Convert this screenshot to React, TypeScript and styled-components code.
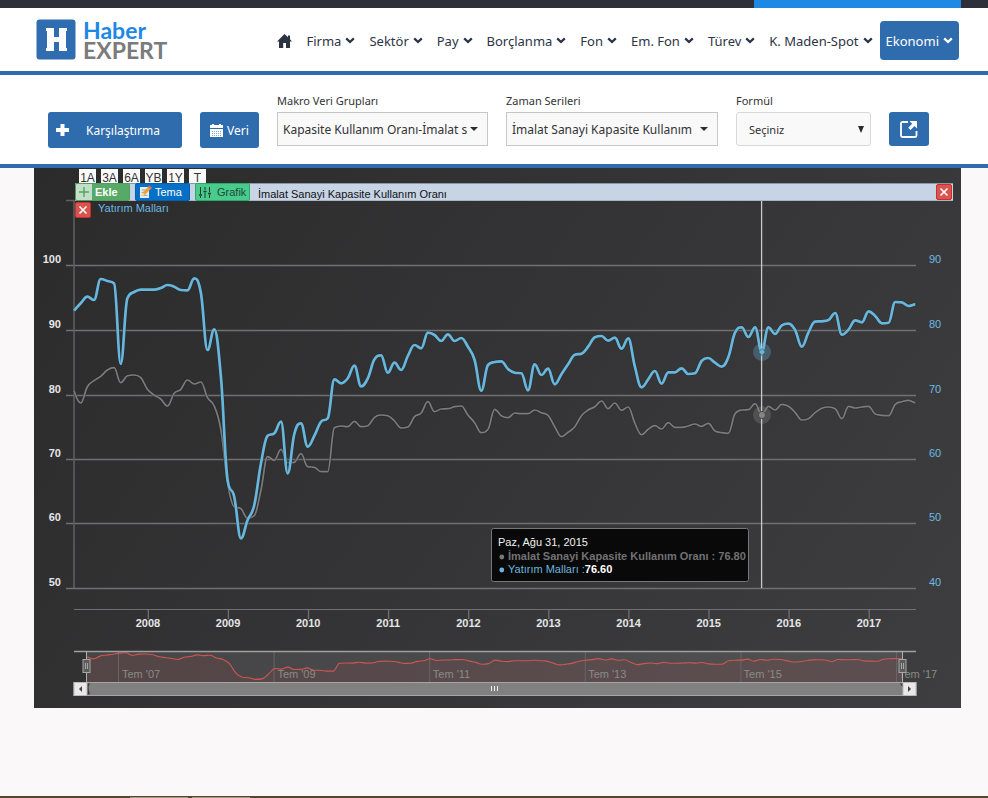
import React from "react";
import styled, { createGlobalStyle } from "styled-components";

const BLUE = "#2f6cae";
const UI_FONT = '"Noto Sans", "Open Sans", sans-serif';
const CHART_FONT = '"Liberation Sans", Arial, sans-serif';

const GlobalStyle = createGlobalStyle`
  *, *::before, *::after { box-sizing: border-box; }
  body { margin: 0; background: #faf8f9; color: #333; font-family: ${UI_FONT}; font-size: 12px; }
  button, select { font-family: inherit; font-size: inherit; color: inherit; margin: 0; }
`;

const Page = styled.div`
  display: flex;
  flex-direction: column;
  min-height: 100vh;
`;

const TopStrip = styled.div`
  display: flex;
  justify-content: flex-end;
  height: 8px;
  padding-right: 27px;
  background: #2f2f3a;
`;

const TopAccent = styled.div`
  width: 207px;
  background: #1e88e5;
`;

const Header = styled.header`
  display: flex;
  align-items: center;
  justify-content: space-between;
  height: 67px;
  padding: 0 29px 0 36px;
  background: #fff;
  border-bottom: 4px solid ${BLUE};
`;

const Logo = styled.a`
  display: flex;
  align-items: center;
  gap: 7px;
  text-decoration: none;
`;

const LogoWords = styled.span`
  display: flex;
  flex-direction: column;
  font-family: Lato, sans-serif;
  font-size: 23px;
  line-height: 20px;
  font-weight: 700;
  color: #7b7b7d;
`;

const LogoTop = styled.span`
  color: #1e88e5;
`;

const Nav = styled.nav`
  display: flex;
  align-items: center;
  padding-top: 2px;
`;

const NavLink = styled.a<{ $active?: boolean }>`
  display: flex;
  align-items: center;
  gap: 4px;
  height: 39px;
  padding: 0 ${(p) => (p.$active ? "6px" : "7px")};
  border-radius: 4px;
  font-size: 13px;
  white-space: nowrap;
  text-decoration: none;
  color: ${(p) => (p.$active ? "#fff" : "#2c3444")};
  background: ${(p) => (p.$active ? BLUE : "transparent")};
`;

const Filters = styled.form`
  display: grid;
  grid-template-columns: 134px 59px 211fr 212fr 135fr 40px;
  column-gap: 18px;
  align-items: end;
  height: 93px;
  padding: 0 59px 16px 48px;
  background: #fff;
  border-bottom: 4px solid ${BLUE};
`;

const ActionButton = styled.button<{ $wide?: boolean }>`
  display: flex;
  align-items: center;
  justify-content: ${(p) => (p.$wide ? "flex-start" : "center")};
  gap: ${(p) => (p.$wide ? "17px" : "4px")};
  height: 36px;
  padding: 0 8px;
  border: 0;
  border-radius: 3px;
  background: ${BLUE};
  color: #fff;
`;

const IconButton = styled(ActionButton)`
  height: 34px;
  margin-bottom: 2px;
  padding: 0;
`;

const Field = styled.div`
  display: flex;
  flex-direction: column;
  min-width: 0;
  margin-bottom: 2px;
`;

const FieldLabel = styled.label`
  height: 21px;
  font-size: 11px;
  line-height: 20px;
  white-space: nowrap;
`;

const SelectBox = styled.div<{ $soft?: boolean }>`
  display: flex;
  align-items: center;
  height: 34px;
  padding-right: ${(p) => (p.$soft ? "5px" : "9px")};
  border: 1px solid ${(p) => (p.$soft ? "#d8d8d8" : "#c6c6c6")};
  border-radius: ${(p) => (p.$soft ? "3px" : "0")};
  background: #f9f9f9;
`;

const Select = styled.select<{ $soft?: boolean }>`
  flex: 1;
  min-width: 0;
  height: 32px;
  padding: 0 0 0 ${(p) => (p.$soft ? "12px" : "5px")};
  border: 0;
  outline: 0;
  appearance: none;
  background: transparent;
  font-size: ${(p) => (p.$soft ? "11px" : "12px")};
`;

const ChartPanel = styled.section`
  display: grid;
  margin: 0 27px 0 34px;
  background: linear-gradient(125deg, #2b2b2c, #3e3e40);
  font-family: ${CHART_FONT};
`;

const ChartSvg = styled.svg`
  grid-area: 1 / 1;
  display: block;
  width: 100%;
  height: auto;
`;

const ChartControls = styled.div`
  grid-area: 1 / 1;
  z-index: 1;
  align-self: start;
  padding: 1px 8px 0 41px;
`;

const Ranges = styled.div`
  display: flex;
  gap: 5px;
  padding-left: 4px;
`;

const RangeButton = styled.button`
  width: 17px;
  height: 14px;
  padding: 3px 0 0;
  border: 0;
  background: #fafafa;
  font-size: 12px;
  line-height: 12px;
`;

const SeriesBar = styled.div`
  display: flex;
  align-items: center;
  height: 18px;
  background: #c7d4e6;
  box-shadow: inset 0 1px #8b97a6, inset 0 -1px #a9b4c3;
  font-size: 11px;
  color: #111;
`;

const BarButton = styled.button<{ $bg: string; $edge: string; $fg: string; $bold?: boolean }>`
  display: flex;
  align-items: center;
  gap: 3px;
  width: 55px;
  height: 18px;
  margin-right: 5px;
  padding: 0;
  border: 1px solid ${(p) => p.$edge};
  border-radius: 2px;
  background: ${(p) => p.$bg};
  color: ${(p) => p.$fg};
  font-size: 11px;
  font-weight: ${(p) => (p.$bold ? 700 : 400)};
`;

const SeriesName = styled.span`
  flex: 1;
  padding: 3px 0 0 3px;
  white-space: nowrap;
`;

const CloseButton = styled.button`
  display: flex;
  align-items: center;
  justify-content: center;
  width: 16px;
  height: 16px;
  margin-right: 1px;
  padding: 0;
  border: 1px solid #c9302c;
  border-radius: 2px;
  background: #d9534f;
`;

const SubSeries = styled.div`
  display: flex;
  align-items: flex-start;
  gap: 6px;
  padding-top: 1px;
  font-size: 11px;
  line-height: 13px;
  color: #6cb9e2;
`;

const Footer = styled.footer`
  display: flex;
  gap: 4px;
  height: 2px;
  margin-top: auto;
  padding: 1px 0 0 130px;
  background: #54472a;
`;

const FooterTab = styled.div`
  width: 58px;
  background: #a39c88;
`;

const Chevron = () => (
  <svg width="10" height="7" viewBox="0 0 10 7" aria-hidden="true">
    <path d="M1.2 1.4 5 5l3.8-3.6" fill="none" stroke="currentColor" strokeWidth="2.3" />
  </svg>
);

const Cross = () => (
  <svg width="10" height="10" viewBox="0 0 10 10" aria-hidden="true">
    <path d="M1.5 1.5l7 7M8.5 1.5l-7 7" stroke="#fff" strokeWidth="1.6" />
  </svg>
);

const Caret = ({ tall }: { tall?: boolean }) => (
  <svg width="8" height={tall ? 7 : 4} viewBox={tall ? "0 0 8 7" : "0 0 8 4"} aria-hidden="true">
    <path d={tall ? "M1 0h6L4 7z" : "M0 0h8L4 4z"} fill="#2b2b2b" />
  </svg>
);

const PLOT_LEFT = 40;
const PLOT_RIGHT = 882;
const MONTH = 6.677;

const investment = [
  142.7, 135.3, 128.7, 132, 111, 113, 115.5, 196, 130.3, 124, 121.7, 121.7, 121.7, 120, 117, 118.7, 122, 122.3, 110.3,
  125, 182, 161.3, 208.7, 312, 328.7, 370.3, 352, 337, 295.3, 267.7, 265.3, 253.7, 305.3, 266, 255.3, 278.7, 267.7,
  253.7, 250.3, 211.3, 215.3, 210.3, 197.7, 218.3, 210.3, 191.3, 187.3, 204.7, 194.7, 202, 188, 177, 180.3, 164.7, 167,
  173, 166.3, 173, 170, 178.7, 192, 222.7, 197, 194, 193.3, 201, 204.7, 205.3, 222.3, 196.3, 207, 200.7, 216.3, 206.3,
  196.3, 186.7, 185.7, 178.7, 169.3, 168, 172.7, 169.7, 180.7, 170.3, 198.7, 219.3, 211.3, 203, 215.7, 204.3, 204.3,
  200.3, 206, 205.3, 193, 190, 194.7, 198.7, 189.3, 164.7, 159.3, 169, 159.3, 183.7, 159.3, 166, 157.3, 155.7, 162,
  178.7, 164.3, 153.7, 153.3, 152, 145, 166.7, 161.7, 152.3, 154.3, 143.3, 148, 155.3, 154.7, 134, 134.3, 138, 136.3,
];

const capacity = [
  222.7, 235, 218.7, 212.7, 208.3, 202, 199.7, 214.7, 207.7, 207, 209.7, 221.3, 227, 231, 238, 225.3, 221.3, 212, 216,
  214, 229.7, 238, 262, 315.3, 338.7, 340.7, 350.3, 347.7, 322, 288.7, 292.3, 281.3, 294.7, 294.3, 285.7, 298.7, 299.3,
  303.7, 303.7, 259.7, 258, 258.7, 253.3, 258.7, 257.7, 249.3, 247, 247.7, 253, 260, 259, 248.7, 245, 233.7, 243.7, 241,
  240.7, 238.7, 238, 247, 254.7, 264.7, 261.3, 241.3, 247.7, 249.7, 245, 245.7, 245.7, 242, 244.7, 247.3, 258.7, 268.7,
  264.3, 258.7, 247.7, 242, 238.7, 233, 240.7, 235, 242.3, 239, 255.3, 266.7, 261.3, 257.7, 261, 254.7, 259.3, 259.3,
  258, 256, 258.3, 255.3, 263, 264.7, 265.3, 245.7, 242, 241.7, 235.7, 247, 238.3, 242, 236.3, 238.3, 244.3, 252, 250.7,
  244.7, 240.3, 239, 240.7, 250.7, 238.3, 240, 239, 238.3, 246, 247.3, 247.7, 236.3, 233.7, 232.3, 234.7,
];

/* Smooth curve whose control points never overshoot the neighbouring values. */
function spline(ys: number[], x0: number, step: number): string {
  const reach = step * 0.4;
  let d = `M${x0} ${ys[0]}`;
  let previous = { x: x0, y: ys[0] };
  for (let i = 1; i < ys.length; i++) {
    const x = x0 + i * step;
    const y = ys[i];
    const last = ys[i - 1];
    let left = y;
    let right = y;
    if (i < ys.length - 1) {
      const next = ys[i + 1];
      const rise = (next - last) * 0.2;
      left = y - rise;
      right = y + rise;
      if (left > last && left > y) {
        left = Math.max(last, y);
        right = 2 * y - left;
      } else if (left < last && left < y) {
        left = Math.min(last, y);
        right = 2 * y - left;
      }
      if (right > next && right > y) {
        right = Math.max(next, y);
        left = 2 * y - right;
      } else if (right < next && right < y) {
        right = Math.min(next, y);
        left = 2 * y - right;
      }
    }
    d += `C${[previous.x, previous.y, x - reach, left, x, y].map((n) => n.toFixed(1)).join(" ")}`;
    previous = { x: x + reach, y: right };
  }
  return d;
}

const NAV_LEFT = 53;
const NAV_RIGHT = 869;
const navStep = (NAV_RIGHT - NAV_LEFT) / (capacity.length - 1);
const navLine = spline(capacity.map((y) => 484.7 + (y - 199.7) * 0.177), NAV_LEFT, navStep);

const gridRows = [
  { y: 97, left: "100", right: "90" },
  { y: 162, left: "90", right: "80" },
  { y: 227, left: "80", right: "70" },
  { y: 291, left: "70", right: "60" },
  { y: 355, left: "60", right: "50" },
  { y: 420, left: "50", right: "40" },
];
const years = [2008, 2009, 2010, 2011, 2012, 2013, 2014, 2015, 2016, 2017];
const navMarks = ["07", "09", "11", "13", "15", "17"];

const Chart = () => (
  <ChartSvg viewBox="0 0 927 540" role="img" aria-label="İmalat Sanayi Kapasite Kullanım Oranı">
    <g stroke="#707073" strokeWidth="1.3">
      {gridRows.map((r) => (
        <path key={r.y} d={`M32 ${r.y + 0.5}H${PLOT_RIGHT}`} />
      ))}
      <path d={`M32 32.5H40M${PLOT_LEFT} 32V420`} stroke="#606063" strokeWidth="1.5" />
      <path d={`M${PLOT_LEFT} 441.5H${PLOT_RIGHT}`} strokeWidth="1" />
      {years.map((y, i) => (
        <path key={y} d={`M${114.3 + i * 80.1} 441v10`} />
      ))}
    </g>
    <g fontSize="11" fontWeight="700" fill="#e6e6e8">
      {gridRows.map((r) => (
        <text key={r.left} x="27" y={r.y - 2} textAnchor="end">{r.left}</text>
      ))}
      {years.map((y, i) => (
        <text key={y} x={114 + i * 80.1} y="459" textAnchor="middle">{y}</text>
      ))}
    </g>
    <g fontSize="11" fill="#6cb9e2">
      {gridRows.map((r) => (
        <text key={r.right} x="895" y={r.y - 2}>{r.right}</text>
      ))}
    </g>

    <g fill="none" strokeLinejoin="round">
      <path d={spline(capacity, PLOT_LEFT, MONTH)} stroke="#232324" strokeWidth="3" opacity=".5" />
      <path d={spline(capacity, PLOT_LEFT, MONTH)} stroke="#7b7b7d" strokeWidth="1.7" />
      <path d={spline(investment, PLOT_LEFT, MONTH)} stroke="#1f2b31" strokeWidth="4" opacity=".5" />
      <path d={spline(investment, PLOT_LEFT, MONTH)} stroke="#69b6dd" strokeWidth="2.7" />
    </g>
    <circle cx="728" cy="184" r="9" fill="#69b6dd" opacity=".3" />
    <circle cx="728" cy="247" r="9" fill="#8a8a8a" opacity=".3" />
    <path d="M727.6 33V420" stroke="#c8c8c8" strokeWidth="1.3" />
    <path d="M728 180.5l3.5 3.5-3.5 3.5-3.5-3.5z" fill="#69b6dd" stroke="#24475a" strokeWidth=".6" />
    <circle cx="728" cy="247" r="3.6" fill="#858585" stroke="#3a3a3a" strokeWidth=".8" />

    <rect x="457.5" y="360.5" width="257" height="53" rx="2" fill="#050505" fillOpacity=".93" stroke="#77777a" />
    <g fontSize="11">
      <text x="464" y="378" fill="#f0f0f0">Paz, Ağu 31, 2015</text>
      <circle cx="467.8" cy="389" r="2.4" fill="#78787a" />
      <text x="474" y="392" fill="#727274" fontWeight="700">İmalat Sanayi Kapasite Kullanım Oranı : 76.80</text>
      <circle cx="467.8" cy="402" r="2.4" fill="#69b6dd" />
      <text x="474" y="405" fill="#69b6dd">
        Yatırım Malları :<tspan fill="#fff" fontWeight="700">76.60</tspan>
      </text>
    </g>

    <rect x={NAV_LEFT} y="483" width={NAV_RIGHT - NAV_LEFT} height="31" fill="#fff" opacity=".1" />
    <path d={`${navLine}V514H${NAV_LEFT}Z`} fill="#ff5050" opacity=".08" />
    <g stroke="#656567">
      {navMarks.map((m, i) => (
        <path key={m} d={`M${84.5 + i * 155.6} 484V514`} />
      ))}
    </g>
    <path d={navLine} fill="none" stroke="#cf5552" strokeWidth="1.1" />
    <g fontSize="11" fill="#8a8a8a">
      {navMarks.map((m, i) => (
        <text key={m} x={88 + i * 155.4} y="510">{`Tem '${m}`}</text>
      ))}
    </g>
    <path d={`M${PLOT_LEFT} 483.5H${PLOT_RIGHT}`} stroke="#a0a0a0" strokeWidth="1.4" />
    <path d={`M${NAV_LEFT - 0.5} 483V515M${NAV_RIGHT - 0.5} 483V515`} stroke="#b0b0b0" />

    <rect x={PLOT_LEFT} y="514.5" width="842" height="13" fill="#808080" stroke="#a6a6a6" />
    <path d="M53 515.5h3q-3 4 0 10l-3 2zM869 515.5h-3l3 4z" fill="#39393a" />
    <path d="M457.5 518v5M460.5 518v5M463.5 518v5" stroke="#f2f2f2" />
    <rect x="40" y="514.5" width="13" height="13" fill="#ebe7e8" stroke="#bbb" />
    <path d="M48 518v6l-3-3z" fill="#444" />
    <rect x="869" y="514.5" width="13" height="13" fill="#ebe7e8" stroke="#bbb" />
    <path d="M874 518v6l3-3z" fill="#444" />
    {[NAV_LEFT - 0.5, NAV_RIGHT - 0.5].map((x) => (
      <g key={x} stroke="#a6a6a6">
        <rect x={x - 3.5} y="491.5" width="7" height="13" fill="#5c5c5c" />
        <path d={`M${x - 1} 495v6M${x + 1} 495v6`} />
      </g>
    ))}
  </ChartSvg>
);

const menu = ["Firma", "Sektör", "Pay", "Borçlanma", "Fon", "Em. Fon", "Türev", "K. Maden-Spot", "Ekonomi"];
const ranges = ["1A", "3A", "6A", "YB", "1Y", "T"];

export default function App() {
  return (
    <Page>
      <GlobalStyle />
      <TopStrip>
        <TopAccent />
      </TopStrip>
      <Header>
        <Logo href="#">
          <svg width="40" height="41" viewBox="0 0 40 41" aria-hidden="true">
            <rect x=".5" y=".5" width="39" height="40" rx="3" fill="#2f6cb0" />
            <path d="M10 9h8v9h5V9h8v3h-1v17h1v3h-8v-9h-5v9h-8v-3h1V12h-1z" fill="#fff" />
          </svg>
          <LogoWords>
            <LogoTop>Haber</LogoTop>
            <span>EXPERT</span>
          </LogoWords>
        </Logo>
        <Nav>
          <NavLink href="#" aria-label="Ana sayfa">
            <svg width="15" height="14" viewBox="0 0 15 14" aria-hidden="true">
              <path d="M7.5 0 11 3.3V1.5h2v3.7L15 7.5h-2V14H9V9H6.2v5H2V7.500H0z" fill="currentColor" />
            </svg>
          </NavLink>
          {menu.map((m) => (
            <NavLink key={m} href="#" $active={m === "Ekonomi"}>
              {m}
              <Chevron />
            </NavLink>
          ))}
        </Nav>
      </Header>

      <Filters onSubmit={(e) => e.preventDefault()}>
        <ActionButton type="button" $wide>
          <svg width="13" height="12" viewBox="0 0 13 12" aria-hidden="true">
            <path d="M6.500 0v12M0 6h13" stroke="#fff" strokeWidth="4" />
          </svg>
          Karşılaştırma
        </ActionButton>
        <ActionButton type="button">
          <svg width="13" height="13" viewBox="0 0 13 13" aria-hidden="true">
            <path d="M0 1h2V0h2v1h5V0h2v1h2v3H0z" fill="#fff" />
            <path d="M0 5h13v8H0z" fill="#fff" />
            <path d="M2 7.500h9M2 9.500h9M2 11.500h9" stroke={BLUE} strokeDasharray="1 1" opacity=".6" />
          </svg>
          Veri
        </ActionButton>
        <Field>
          <FieldLabel htmlFor="group">Makro Veri Grupları</FieldLabel>
          <SelectBox>
            <Select id="group">
              <option>Kapasite Kullanım Oranı-İmalat s</option>
            </Select>
            <Caret />
          </SelectBox>
        </Field>
        <Field>
          <FieldLabel htmlFor="series">Zaman Serileri</FieldLabel>
          <SelectBox>
            <Select id="series">
              <option>İmalat Sanayi Kapasite Kullanım</option>
            </Select>
            <Caret />
          </SelectBox>
        </Field>
        <Field>
          <FieldLabel htmlFor="formula">Formül</FieldLabel>
          <SelectBox $soft>
            <Select id="formula" $soft>
              <option>Seçiniz</option>
            </Select>
            <Caret tall />
          </SelectBox>
        </Field>
        <IconButton type="button" aria-label="Yeni pencerede aç">
          <svg width="18" height="18" viewBox="0 0 18 18" aria-hidden="true">
            <path d="M8 2H2.500Q1 2 1 3.500V15.500Q1 17 2.500 17H15Q16.500 17 16.500 15.500V11" fill="none" stroke="#fff" strokeWidth="1.8" />
            <path d="M9.500 1H17v7.500l-2.500-2.500-4 4-2.300-2.300 4-4z" fill="#fff" />
          </svg>
        </IconButton>
      </Filters>

      <ChartPanel>
        <Chart />
        <ChartControls>
          <Ranges>
            {ranges.map((r) => (
              <RangeButton key={r} type="button">{r}</RangeButton>
            ))}
          </Ranges>
          <SeriesBar>
            <BarButton type="button" $bg="linear-gradient(90deg,#c3dfc8 16px,#57a967 16px)" $edge="#4f9d60" $fg="#fff" $bold>
              <svg width="16" height="14" viewBox="0 0 16 14" aria-hidden="true">
                <path d="M8 2v10M3 7h10" stroke="#4fa660" strokeWidth="1.4" />
              </svg>
              Ekle
            </BarButton>
            <BarButton type="button" $bg="#0670c6" $edge="#045fae" $fg="#fff">
              <svg width="16" height="14" viewBox="0 0 16 14" aria-hidden="true">
                <path d="M4 2h9v11H4z" fill="#e9eef3" />
                <path d="M5.500 5h5M5.500 7.500h4M5.500 10.500h6" stroke="#9aa" />
                <path d="M5.500 11l1-3.500L13 1l2.500 2L9 10z" fill="#f0a03c" />
                <path d="M12 2l1.500-1.500L16 3l-1.500 1.500z" fill="#e46a5e" />
                <path d="M5.500 11l1-3.500L9 10z" fill="#f5ddb5" />
              </svg>
              Tema
            </BarButton>
            <BarButton type="button" $bg="#49cb8b" $edge="#2fa86c" $fg="#1c4a38">
              <svg width="18" height="14" viewBox="0 0 18 14" aria-hidden="true">
                <path d="M4.500 2v7M4.500 11v2M9 2v3M9 7.500V13M13.500 2v5M13.500 9.500V13" stroke="#173f30" />
                <path d="M3 10h3M7.500 6.500h3M12 8.500h3" stroke="#173f30" strokeWidth="1.5" />
              </svg>
              Grafik
            </BarButton>
            <SeriesName>İmalat Sanayi Kapasite Kullanım Oranı</SeriesName>
            <CloseButton type="button" aria-label="Seriyi kapat">
              <Cross />
            </CloseButton>
          </SeriesBar>
          <SubSeries>
            <CloseButton type="button" aria-label="Yatırım Malları serisini kaldır">
              <Cross />
            </CloseButton>
            Yatırım Malları
          </SubSeries>
        </ChartControls>
      </ChartPanel>

      <Footer>
        <FooterTab />
        <FooterTab />
      </Footer>
    </Page>
  );
}
